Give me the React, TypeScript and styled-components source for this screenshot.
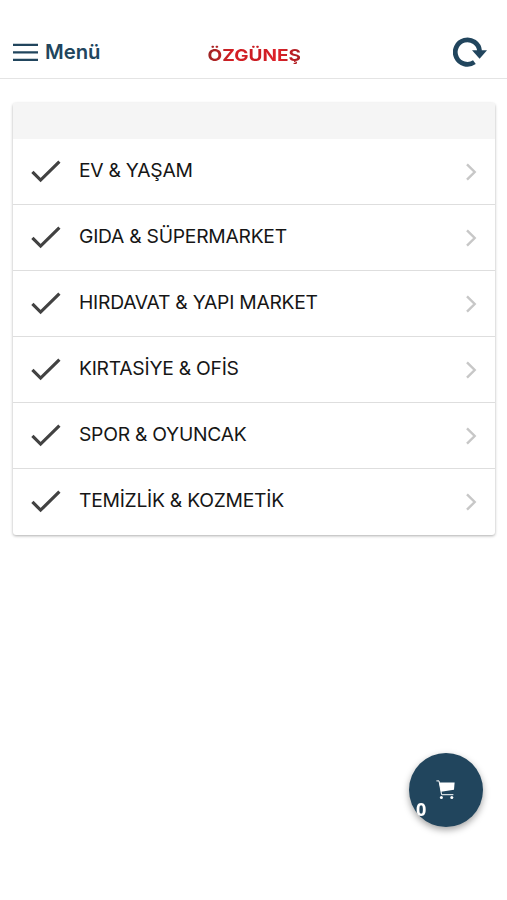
import React from "react";
import styled, { createGlobalStyle } from "styled-components";

const GlobalStyle = createGlobalStyle`
  *, *::before, *::after { box-sizing: border-box; }
  html, body { margin: 0; background: #fff; }
  body { font-family: Inter, "Liberation Sans", sans-serif; overflow: hidden; }
`;

const Screen = styled.div`
  display: flex;
  flex-direction: column;
  height: 900px;
  background: #fff;
`;

const Header = styled.header`
  display: grid;
  grid-template-columns: 1fr auto 1fr;
  align-items: center;
  height: 79px;
  padding: 26px 20px 0 13px;
  border-bottom: 1px solid #e4e4e4;
`;

const MenuButton = styled.button`
  display: flex;
  align-items: center;
  gap: 7px;
  padding: 0;
  border: 0;
  background: none;
  color: #21455d;
  font: 600 20.3px/26px Inter, sans-serif;
`;

const Logo = styled.span`
  margin: 5px 0 0 8px;
  font: 700 16.4px/24px Inter, sans-serif;
  color: transparent;
  background: linear-gradient(90deg, #9c2424, #d71f24 28%, #c81c22 55%, #e0222a 75%, #a61e22);
  background-clip: text;
  -webkit-background-clip: text;
  transform: scaleX(1.16);
`;

const RefreshButton = styled.button`
  display: flex;
  justify-self: end;
  padding: 0;
  border: 0;
  background: none;
`;

const Card = styled.main`
  margin: 24px 12px 0 13px;
  height: 432px;
  border-radius: 3px;
  overflow: hidden;
  box-shadow: 0 1px 3px rgba(0, 0, 0, 0.32);
`;

const CardHeader = styled.div`
  height: 36px;
  background: #f5f5f5;
`;

const Row = styled.div`
  display: flex;
  align-items: center;
  height: 66px;
  padding: 0 18px 0;
  border-bottom: 1px solid #dedede;
  &:last-child { border-bottom-color: transparent; }
`;

const Label = styled.span`
  flex: 1;
  margin: -3px 0 0 18px;
  font-size: 19.3px;
  line-height: 26px;
  letter-spacing: -0.26px;
  color: #161616;
  white-space: nowrap;
`;

const CartButton = styled.button`
  position: fixed;
  right: 24px;
  bottom: 73px;
  display: flex;
  align-items: center;
  justify-content: center;
  width: 74px;
  height: 74px;
  padding: 0;
  border: 0;
  border-radius: 50%;
  background: #21455d;
  box-shadow: 0 3px 7px rgba(0, 0, 0, 0.36);
`;

const Count = styled.span`
  position: absolute;
  left: 7px;
  bottom: 8px;
  font: 700 18px/20px "Open Sans", sans-serif;
  color: #fff;
`;

const MenuIcon = () => (
  <svg width="25" height="20" viewBox="0 0 25 20" stroke="#21455d" strokeWidth="2.3">
    <path d="M0 2.9H25M0 10.4H25M0 17.9H25" />
  </svg>
);

const RefreshIcon = () => (
  <svg width="34" height="32" viewBox="0 0 34 32">
    <path d="M21.4 26.1A12.2 12.2 0 1 1 26.6 15" fill="none" stroke="#21455d" strokeWidth="4.8" />
    <path d="M19 14.2H34L26.6 22.8Z" fill="#21455d" />
  </svg>
);

const CheckIcon = () => (
  <svg width="30" height="24" viewBox="0 0 30 24">
    <path d="M1.4 11.9L9.6 20.1L28.4 1.7" fill="none" stroke="#424242" strokeWidth="3.2" />
  </svg>
);

const Chevron = () => (
  <svg width="12" height="18" viewBox="0 0 12 18">
    <path d="M2 1.3L9.7 9L2 16.7" fill="none" stroke="#c7c7c7" strokeWidth="2.4" />
  </svg>
);

const CartIcon = () => (
  <svg width="20" height="20" viewBox="0 0 20 20" fill="#fff">
    <path d="M3.2 2.6H18.6L18 9.7L5 11.8Z" />
    <path d="M.4 .9H3L5.6 14.7H17.4" fill="none" stroke="#fff" strokeWidth="1" />
    <circle cx="5.4" cy="17.4" r="1.5" />
    <circle cx="15.8" cy="17.4" r="1.5" />
  </svg>
);

const categories = [
  "EV & YAŞAM",
  "GIDA & SÜPERMARKET",
  "HIRDAVAT & YAPI MARKET",
  "KIRTASİYE & OFİS",
  "SPOR & OYUNCAK",
  "TEMİZLİK & KOZMETİK",
];

export default function App() {
  return (
    <Screen>
      <GlobalStyle />
      <Header>
        <MenuButton><MenuIcon />Menü</MenuButton>
        <Logo>ÖZGÜNEŞ</Logo>
        <RefreshButton aria-label="Yenile"><RefreshIcon /></RefreshButton>
      </Header>
      <Card>
        <CardHeader />
        {categories.map((name) => (
          <Row key={name}>
            <CheckIcon />
            <Label>{name}</Label>
            <Chevron />
          </Row>
        ))}
      </Card>
      <CartButton aria-label="Sepet">
        <CartIcon />
        <Count>0</Count>
      </CartButton>
    </Screen>
  );
}
